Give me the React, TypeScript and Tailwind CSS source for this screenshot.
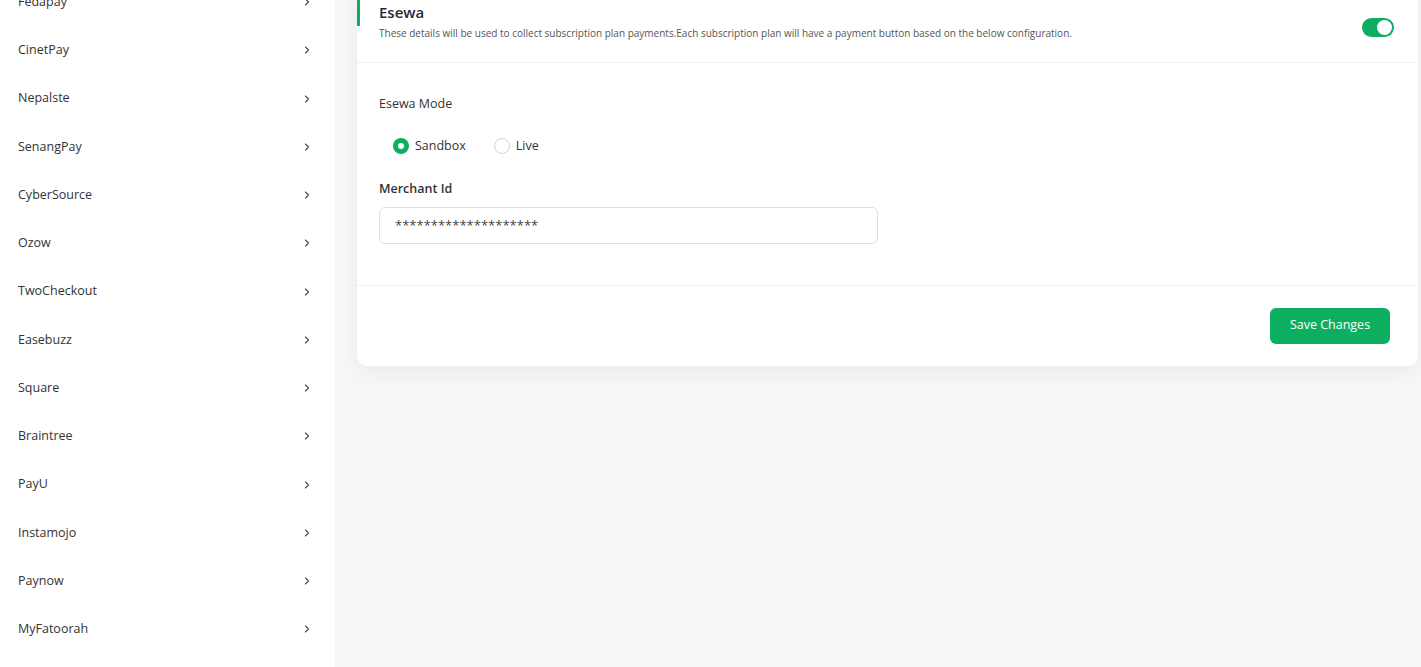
import { ChevronRight } from "lucide-react";

const gateways = [
  "Fedapay",
  "CinetPay",
  "Nepalste",
  "SenangPay",
  "CyberSource",
  "Ozow",
  "TwoCheckout",
  "Easebuzz",
  "Square",
  "Braintree",
  "PayU",
  "Instamojo",
  "Paynow",
  "MyFatoorah",
  "Paiementpro",
];

export default function App() {
  return (
    <div
      className="flex h-[667px] overflow-hidden bg-[#f6f7f7] text-[#293240]"
      style={{ fontFamily: '"Open Sans", "Noto Sans", sans-serif' }}
    >
      {/* gateway list */}
      <aside className="w-[335px] shrink-0 bg-white">
        <ul className="-mt-[22px]">
          {gateways.map((g) => (
            <li
              key={g}
              className="flex h-[48.25px] items-center justify-between pl-[18px] pr-[22px] text-[12.5px] text-[#333]"
            >
              <span>{g}</span>
              <ChevronRight size={12} strokeWidth={2.2} className="text-[#444]" />
            </li>
          ))}
        </ul>
      </aside>

      {/* settings card */}
      <main className="flex-1 pl-[22px] pr-[3px]">
        <div className="-mt-[16px] rounded-[10px] bg-white shadow-[0_6px_24px_rgba(0,0,0,0.06)]">
          <div className="flex items-start justify-between border-b border-[#eef0f2] pb-[22px] pt-[14px] pr-[24px]">
            <div>
              <div className="border-l-[3px] border-[#0caf60] pl-[19px] text-[15px] font-semibold leading-[28px] text-[#1f2937]">
                Esewa
              </div>
              <p className="pl-[22px] text-[10px] leading-[14px] text-[#555]">
                These details will be used to collect subscription plan payments.Each subscription plan will have a
                payment button based on the below configuration.
              </p>
            </div>
            <div className="mt-[20px] flex h-[19px] w-[32px] items-center justify-end rounded-full bg-[#0caf60] px-[2px]">
              <div className="h-[15px] w-[15px] rounded-full bg-white" />
            </div>
          </div>

          <div className="border-b border-[#eef0f2] px-[22px] pb-[41px] pt-[32px]">
            <div className="text-[12.5px] leading-[18px] text-[#333]">Esewa Mode</div>
            <div className="mt-[24px] flex items-center pl-[14px] text-[12.5px] text-[#333]">
              <span className="flex h-[16px] w-[16px] items-center justify-center rounded-full bg-[#0caf60]">
                <span className="h-[6px] w-[6px] rounded-full bg-white" />
              </span>
              <span className="ml-[6px]">Sandbox</span>
              <span className="ml-[28px] h-[16px] w-[16px] rounded-full border border-[#cfd4da]" />
              <span className="ml-[6px]">Live</span>
            </div>
            <div className="mt-[24px] text-[12.5px] font-semibold leading-[18px] text-[#333]">Merchant Id</div>
            <div className="mt-[9px] flex h-[37px] w-[499px] items-center rounded-[6px] border border-[#dcdfe3] px-[15px] text-[13px] text-[#444]">
              ********************
            </div>
          </div>

          <div className="flex justify-end px-[28px] pb-[22px] pt-[22px]">
            <button
              type="button"
              className="h-[36px] w-[120px] rounded-[6px] bg-[#0caf60] text-[12.5px] font-medium text-white"
            >
              Save Changes
            </button>
          </div>
        </div>
      </main>
    </div>
  );
}
